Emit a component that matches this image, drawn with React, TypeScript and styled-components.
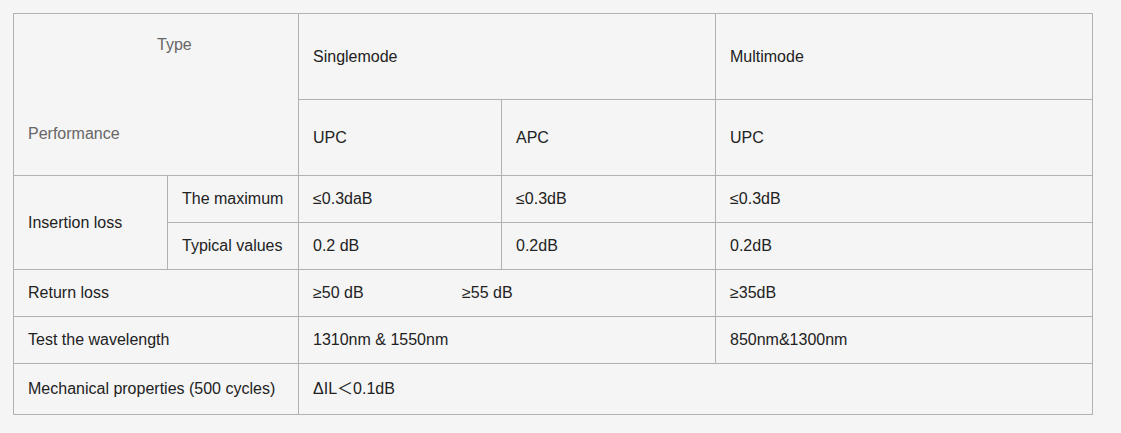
import React from "react";
import styled, { createGlobalStyle } from "styled-components";

const Global = createGlobalStyle`
  html, body {
    margin: 0;
    padding: 0;
    background: #f5f5f5;
  }
  body {
    font-family: "Liberation Sans", Arial, "Noto Sans CJK SC", sans-serif;
    font-size: 16px;
    line-height: 18px;
    color: #222;
  }
`;

const Page = styled.div`
  padding: 13px;
  width: 1080px;
`;

const Table = styled.div`
  display: grid;
  grid-template-columns: 153px 130px 202px 213px 376px;
  grid-template-rows: 85px 75px 46px 46px 46px 46px 50px;
  gap: 1px;
  padding: 1px;
  background: #b2b2b2;
  width: 1080px;
  box-sizing: border-box;
`;

const Cell = styled.div<{ $col: string; $row: string }>`
  grid-column: ${(p) => p.$col};
  grid-row: ${(p) => p.$row};
  background: #f5f5f5;
  display: flex;
  align-items: center;
  padding: 0 14px;
  white-space: nowrap;
`;

const Corner = styled.div`
  grid-column: 1 / 3;
  grid-row: 1 / 3;
  background: #f5f5f5;
  display: flex;
  flex-direction: column;
  justify-content: space-between;
  padding: 22px 14px 32px;
  color: #666;
`;

const TypeLabel = styled.span`
  padding-left: 129px;
`;

const Pair = styled.span`
  display: inline-block;
  width: 149px;
`;

type Row = { label: string; col: string; row: string };

const header: Row[] = [
  { label: "Singlemode", col: "3 / 5", row: "1" },
  { label: "Multimode", col: "5", row: "1" },
  { label: "UPC", col: "3", row: "2" },
  { label: "APC", col: "4", row: "2" },
  { label: "UPC", col: "5", row: "2" },
];

const body: Row[] = [
  { label: "Insertion loss", col: "1", row: "3 / 5" },
  { label: "The maximum", col: "2", row: "3" },
  { label: "≤0.3daB", col: "3", row: "3" },
  { label: "≤0.3dB", col: "4", row: "3" },
  { label: "≤0.3dB", col: "5", row: "3" },
  { label: "Typical values", col: "2", row: "4" },
  { label: "0.2 dB", col: "3", row: "4" },
  { label: "0.2dB", col: "4", row: "4" },
  { label: "0.2dB", col: "5", row: "4" },
  { label: "Return loss", col: "1 / 3", row: "5" },
  { label: "≥35dB", col: "5", row: "5" },
  { label: "Test the wavelength", col: "1 / 3", row: "6" },
  { label: "1310nm & 1550nm", col: "3 / 5", row: "6" },
  { label: "850nm&1300nm", col: "5", row: "6" },
  { label: "Mechanical properties (500 cycles)", col: "1 / 3", row: "7" },
  { label: "ΔIL＜0.1dB", col: "3 / 6", row: "7" },
];

export default function App() {
  return (
    <Page>
      <Global />
      <Table>
        <Corner>
          <TypeLabel>Type</TypeLabel>
          <span>Performance</span>
        </Corner>
        {header.map((c, i) => (
          <Cell key={"h" + i} $col={c.col} $row={c.row}>
            {c.label}
          </Cell>
        ))}
        {body.map((c, i) => (
          <Cell key={"b" + i} $col={c.col} $row={c.row}>
            {c.label}
          </Cell>
        ))}
        <Cell $col="3 / 5" $row="5">
          <Pair>≥50 dB</Pair>
          <span>≥55 dB</span>
        </Cell>
      </Table>
    </Page>
  );
}
